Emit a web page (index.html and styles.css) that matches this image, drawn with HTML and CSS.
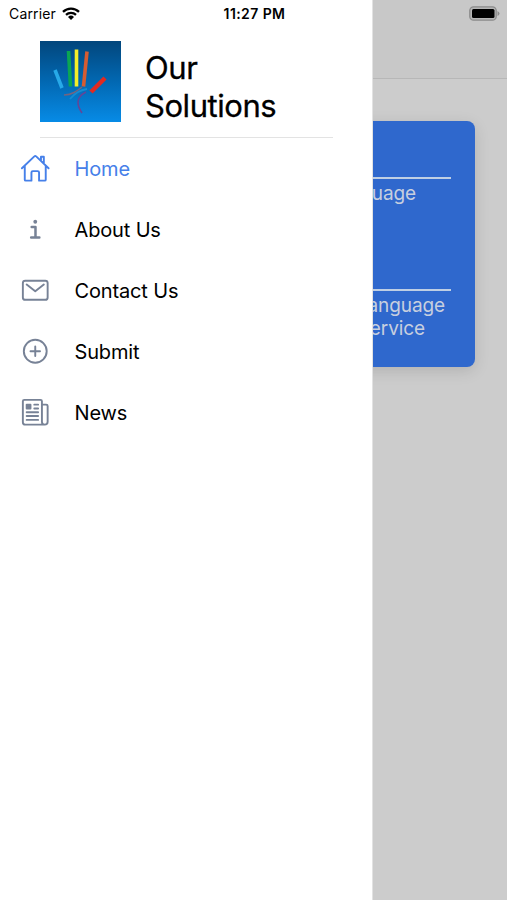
FILE: index.html
```html
<!DOCTYPE html>
<html lang="en">
<head>
<meta charset="utf-8">
<title>Our Solutions</title>
<link rel="stylesheet" href="styles.css">
</head>
<body>
<div class="screen">
  <main class="page">
    <header class="toolbar"></header>
    <section class="card">
      <div class="entry"><p class="first">Language</p></div>
      <div class="entry"><p class="second">Language</p><p class="third">Service</p></div>
    </section>
  </main>
  <aside class="drawer">
    <div class="brand">
      <svg class="logo" viewBox="0 0 81 81">
        <defs><linearGradient id="sky" x1="0" y1="0" x2="0" y2="1"><stop offset="0" stop-color="#02467c"/><stop offset=".5" stop-color="#0268b2"/><stop offset="1" stop-color="#078be6"/></linearGradient></defs>
        <rect width="81" height="81" fill="url(#sky)"/>
        <g fill="none" stroke-width="3.6">
          <path d="M15 29l7 18" stroke="#27a9e8"/>
          <path d="M28.500 10l2 35.500" stroke="#0aa653"/>
          <path d="M36.500 8.500v37" stroke="#f5ef28"/>
          <path d="M47 10.500l-3.500 35" stroke="#d65c32"/>
          <path d="M65 37L51 51" stroke="#e12a21" stroke-width="4.500"/>
          <path d="M24 54c8 0 13-4 18-8" stroke="#76647e" stroke-width="1.500"/>
          <path d="M30 58c4-5 10-9 17-10" stroke="#168bd0" stroke-width="1.800"/>
          <path d="M46 51c-12 6-8 15-4 21" stroke="#644698" stroke-width="1.600"/>
        </g>
      </svg>
      <h1>Our<br>Solutions</h1>
    </div>
    <nav>
      <a class="item active"><svg viewBox="0 0 512 512"><path d="M80 212v236a16 16 0 0 0 16 16h96V328a24 24 0 0 1 24-24h80a24 24 0 0 1 24 24v136h96a16 16 0 0 0 16-16V212M480 256 266.890 52c-5-5.280-16.690-5.340-21.780 0L32 256M400 179V64h-48v69"/></svg><span>Home</span></a>
      <a class="item"><svg viewBox="0 0 512 512"><path class="thick" d="M196 220h64v172M187 396h138"/><circle class="solid" cx="256" cy="130" r="32"/></svg><span>About Us</span></a>
      <a class="item"><svg viewBox="0 0 512 512"><rect x="48" y="96" width="416" height="320" rx="40"/><path d="m112 160 144 112 144-112"/></svg><span>Contact Us</span></a>
      <a class="item"><svg viewBox="0 0 512 512"><circle cx="256" cy="256" r="192"/><path d="M256 176v160M336 256H176"/></svg><span>Submit</span></a>
      <a class="item"><svg viewBox="0 0 512 512"><path d="M368 415.860V72a24 24 0 0 0-24-24H72a24 24 0 0 0-24 24v352a40 40 0 0 0 40 40h328M416 464a48 48 0 0 1-48-48V128h72a24 24 0 0 1 24 24v264a48 48 0 0 1-48 48zM240 128h64M240 192h64M112 256h192M112 320h192M112 384h192"/><rect class="solid" x="96" y="112" width="96" height="96" rx="16"/></svg><span>News</span></a>
    </nav>
  </aside>
  <div class="status">
    <div class="carrier"><span>Carrier</span>
      <svg class="wifi" viewBox="0 0 18 13"><g fill="none" stroke="#000" stroke-width="2.300"><path d="M1 4.800a11.500 11.500 0 0 1 16 0M4 7.900a7.300 7.300 0 0 1 10 0"/></g><path d="M9 12.900 6 9.900a4.300 4.300 0 0 1 6 0z"/></svg>
    </div>
    <time>11:27 PM</time>
    <svg class="battery" viewBox="0 0 31 15"><rect x=".8" y=".8" width="26.400" height="13.400" rx="3.800" fill="#b6b6b6" stroke="#8b8b8b" stroke-width="1.300"/><rect x="3" y="3" width="22.500" height="9" rx="1.500"/><path d="M28.500 5v5q2-1 2-2.500t-2-2.500" fill="#8b8b8b"/></svg>
  </div>
</div>
</body>
</html>
```
FILE: styles.css
```css
* { box-sizing: border-box; }
body { margin: 0; font-family: Inter, "Liberation Sans", sans-serif; color: #000; }
h1, p { margin: 0; }
.screen { position: relative; width: 507px; height: 900px; overflow: hidden; }
.page { height: 100%; background: #ccc; }
.toolbar { height: 79px; background: #c8c8c8; border-bottom: 1px solid #b7b7b7; }
.card { width: 443px; height: 246px; margin: 42px 32px 0; padding: 56px 24px 0; border-radius: 8px; background: #2f68cd; box-shadow: 0 4px 15px rgba(0, 0, 0, .13); color: #c7cfdf; }
.entry { height: 112px; border-top: 2px solid #bfcfe4; padding-top: 3px; }
.entry p { font-size: 19px; line-height: 23px; text-align: right; letter-spacing: -.1px; }
.entry .first { padding-right: 35px; }
.entry .second { padding-right: 6px; }
.entry .third { padding-right: 26px; }
.drawer { position: absolute; inset: 0 auto 0 0; width: 373px; background: #fff; border-right: 1px solid #e2e2e2; }
.brand { display: flex; width: 293px; height: 138px; margin-left: 40px; padding-top: 41px; border-bottom: 1px solid #e3e3e3; }
.logo { width: 81px; height: 81px; }
.brand h1 { margin: 8px 0 0 24px; font-size: 31px; line-height: 38px; font-weight: 400; -webkit-text-stroke: .3px; letter-spacing: -.45px; }
.item { display: flex; align-items: center; height: 61px; padding-left: 20px; font-size: 20px; letter-spacing: -.15px; }
.item svg { width: 30.500px; height: 30.500px; margin-right: 24px; fill: none; stroke: #778296; stroke-width: 32; stroke-linecap: round; stroke-linejoin: round; }
.item .thick { stroke-width: 42; }
.item .solid { fill: #778296; stroke: none; }
.item.active { color: #4680e9; }
.item.active svg { stroke: #4680e9; }
.status { position: absolute; inset: 0 0 auto; height: 27px; padding: 0 7px 0 9px; display: grid; grid-template-columns: 1fr auto 1fr; align-items: center; font-size: 14px; }
.carrier { display: flex; align-items: center; gap: 6px; letter-spacing: .15px; }
.wifi { width: 18px; height: 13px; }
.status time { font-weight: 600; letter-spacing: .4px; }
.battery { width: 31px; height: 15px; justify-self: end; }
```
